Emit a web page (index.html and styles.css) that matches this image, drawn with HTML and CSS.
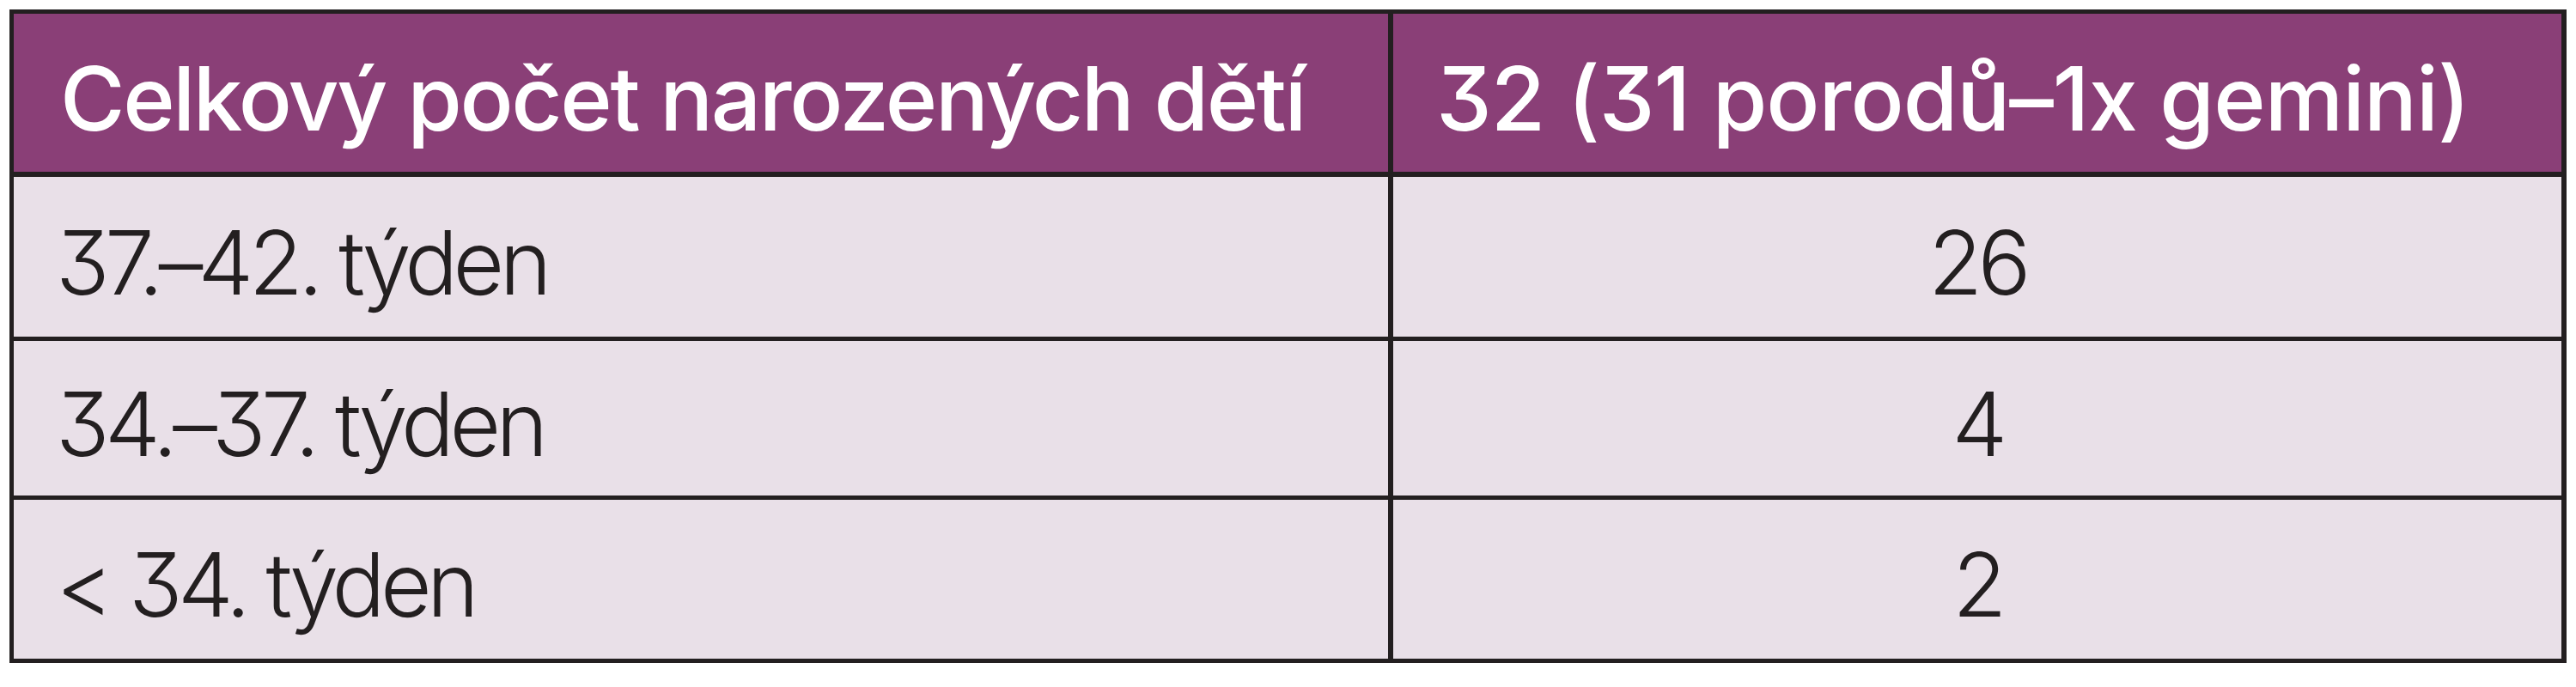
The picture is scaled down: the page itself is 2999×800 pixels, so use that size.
FILE: index.html
```html
<!DOCTYPE html>
<html lang="cs">
<head>
<meta charset="utf-8">
<title>Tabulka</title>
<link rel="stylesheet" href="styles.css">
</head>
<body>
<div class="table">
  <div class="cell head c1 r0">Celkový počet narozených dětí</div>
  <div class="cell head c2 r0">32 (31 porodů–1x gemini)</div>
  <div class="cell c1 r1">37.–42. týden</div>
  <div class="cell c2 r1 center">26</div>
  <div class="cell c1 r2">34.–37. týden</div>
  <div class="cell c2 r2 center">4</div>
  <div class="cell c1 r3">&lt; 34. týden</div>
  <div class="cell c2 r3 center">2</div>
</div>
</body>
</html>
```

FILE: styles.css
```css
html, body {
  margin: 0;
  padding: 0;
  background: #ffffff;
}
body {
  font-family: Inter, "Liberation Sans", sans-serif;
  font-feature-settings: "cv09" 1;
}
.table {
  margin: 11px 0 0 11px;
  width: 2966px;
  display: grid;
  grid-template-columns: 1606px 1360px;
  border: 5px solid #231f20;
  border-right-width: 6px;
  background: #e9e0e8;
}
.cell {
  display: flex;
  align-items: center;
  box-sizing: border-box;
  padding: 12px 50px 0 50px;
  font-size: 103px;
  font-weight: 260;
  letter-spacing: -5.6px;
  color: #231f20;
  white-space: nowrap;
  border-bottom: 5px solid #231f20;
}
.c1 {
  border-right: 6px solid #231f20;
  padding-left: 49px;
}
.head {
  background: #8a3f77;
  color: #ffffff;
  font-weight: 500;
  letter-spacing: -1px;
}
.head.c1 {
  padding-left: 54px;
  letter-spacing: -2.4px;
}
.center {
  justify-content: center;
  padding-left: 0;
  padding-right: 0;
}
.r0 { height: 190px; border-bottom-width: 6px; }
.r1 { height: 191px; }
.r2 { height: 185px; }
.r3 { height: 185px; border-bottom: none; }
```
